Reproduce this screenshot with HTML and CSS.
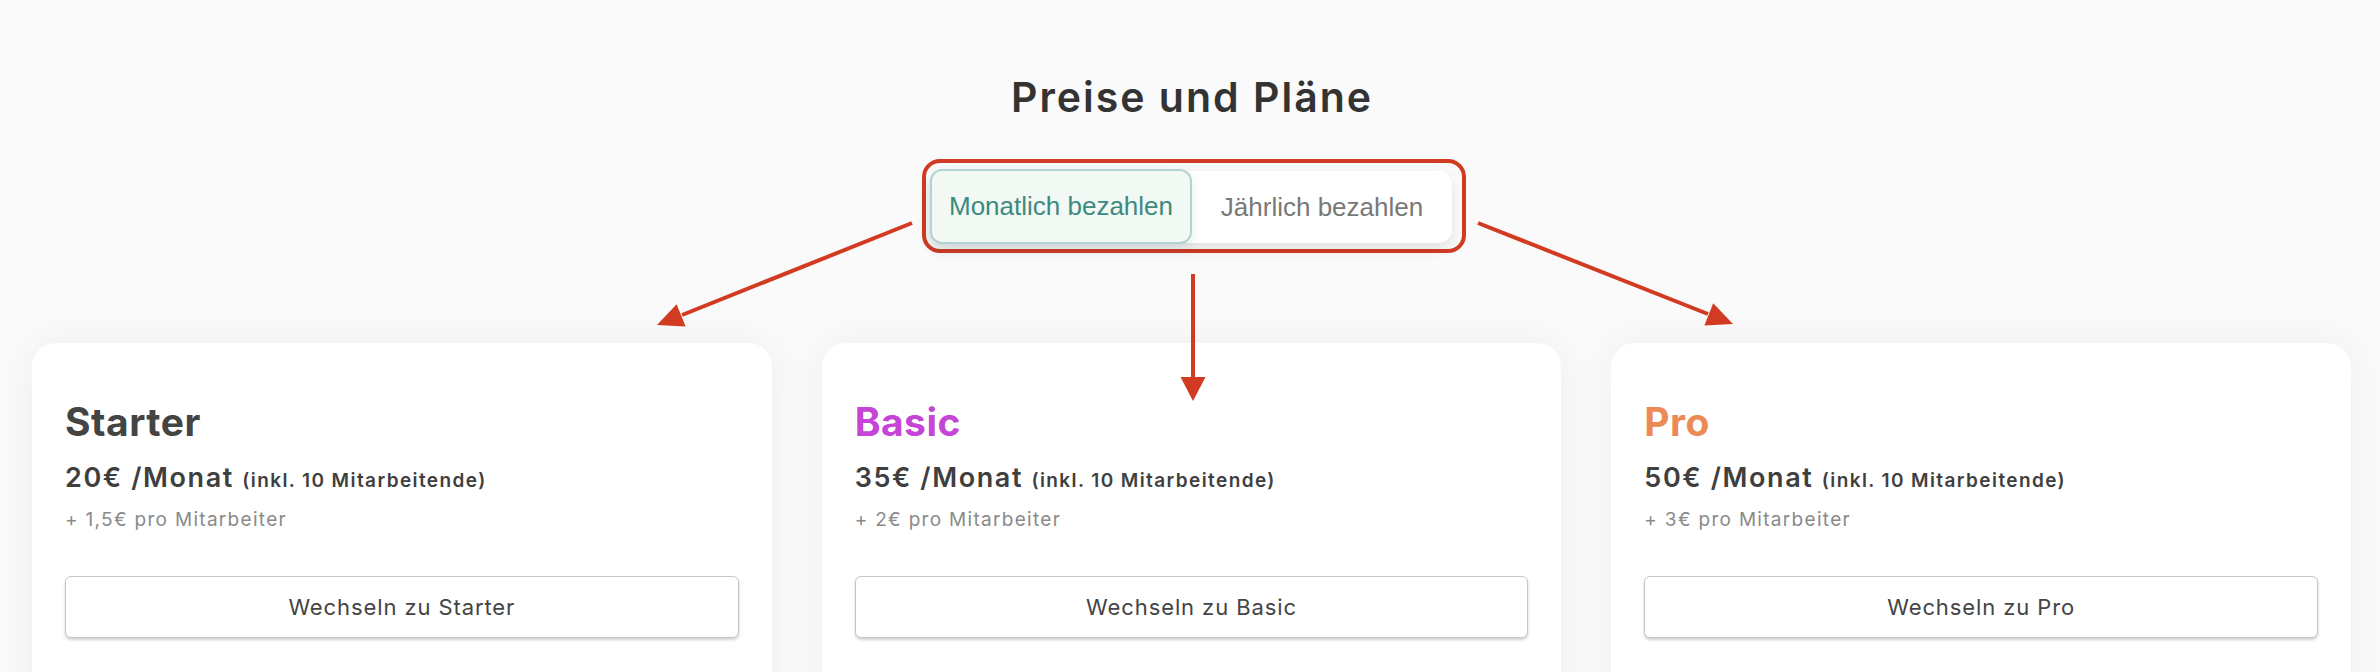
FILE: index.html
```html
<!DOCTYPE html>
<html lang="de">
<head>
<meta charset="utf-8">
<title>Preise und Pläne</title>
<link rel="stylesheet" href="styles.css">
</head>
<body>
<main class="page">
  <h1 class="title">Preise und Pläne</h1>
  <div class="toggle-frame">
    <div class="toggle">
      <button class="opt opt-active">Monatlich bezahlen</button>
      <button class="opt opt-idle">Jährlich bezahlen</button>
    </div>
  </div>
  <section class="plans">
    <article class="card">
      <h2 class="plan-name plan-starter">Starter</h2>
      <p class="price">20€ /Monat <span class="incl">(inkl. 10 Mitarbeitende)</span></p>
      <p class="extra">+ 1,5€ pro Mitarbeiter</p>
      <button class="switch">Wechseln zu Starter</button>
      <ul class="features"><li>Zeiterfassung für alle Mitarbeitenden</li></ul>
    </article>
    <article class="card">
      <h2 class="plan-name plan-basic">Basic</h2>
      <p class="price">35€ /Monat <span class="incl">(inkl. 10 Mitarbeitende)</span></p>
      <p class="extra">+ 2€ pro Mitarbeiter</p>
      <button class="switch">Wechseln zu Basic</button>
      <ul class="features"><li>Alles aus Starter, zusätzlich</li></ul>
    </article>
    <article class="card">
      <h2 class="plan-name plan-pro">Pro</h2>
      <p class="price">50€ /Monat <span class="incl">(inkl. 10 Mitarbeitende)</span></p>
      <p class="extra">+ 3€ pro Mitarbeiter</p>
      <button class="switch">Wechseln zu Pro</button>
      <ul class="features"><li>Alles aus Basic, zusätzlich</li></ul>
    </article>
  </section>
</main>
<svg class="arrows" width="2380" height="672" viewBox="0 0 2380 672" aria-hidden="true">
  <g stroke="#d13b22" stroke-width="4" stroke-linecap="butt" fill="none">
    <line x1="912" y1="223" x2="682" y2="315"/>
    <line x1="1193" y1="274" x2="1193" y2="378"/>
    <line x1="1478" y1="223" x2="1708" y2="314"/>
  </g>
  <g fill="#d13b22">
    <polygon points="657,325 685.6,326.5 676.6,304.3"/>
    <polygon points="1193,401 1180.5,377 1205.5,377"/>
    <polygon points="1733,324 1704.4,325.6 1713.2,303.2"/>
  </g>
</svg>
</body>
</html>
```
FILE: styles.css
```css
html, body {
  margin: 0;
  padding: 0;
}
body {
  background: #fafafa;
  font-family: "Inter", "Lato", "Liberation Sans", sans-serif;
  color: #3c3c3c;
  position: relative;
  overflow: hidden;
  height: 672px;
}
.page {
  display: flex;
  flex-direction: column;
  align-items: center;
  padding-top: 73px;
}
.title {
  margin: 0 0 0 4px;
  font-size: 41px;
  line-height: 48px;
  font-weight: 600;
  letter-spacing: 2px;
  color: #333;
}
.toggle-frame {
  margin: 38px 0 0 8px;
  border: 4px solid #d13b22;
  border-radius: 18px;
  padding: 8px 10px 6px 4px;
}
.toggle {
  display: flex;
  align-items: center;
  height: 72px;
  width: 522px;
  background: #fff;
  border-radius: 14px;
  box-shadow: 0 6px 14px rgba(0, 0, 0, 0.10);
}
.opt {
  font-family: "Liberation Sans", Arial, sans-serif;
  font-size: 26px;
  border: none;
  background: none;
  padding: 0;
  cursor: pointer;
}
.opt-active {
  width: 262px;
  height: 75px;
  margin-top: -1px;
  background: #f2f8f4;
  border: 2px solid #b3d3d2;
  border-radius: 12px;
  color: #3d8a80;
  box-shadow: 0 6px 12px rgba(60, 120, 120, 0.12);
}
.opt-idle {
  flex: 1;
  height: 72px;
  color: #787878;
}
.plans {
  align-self: stretch;
  display: grid;
  grid-template-columns: repeat(3, 1fr);
  gap: 50px;
  padding: 0 29px 0 32px;
  margin-top: 90px;
}
.card {
  background: #fff;
  border-radius: 24px;
  padding: 55px 33px 40px;
  box-shadow: 0 0 40px rgba(0, 0, 0, 0.05);
}
.plan-name {
  margin: 0;
  font-size: 39px;
  line-height: 48px;
  font-weight: 700;
  letter-spacing: 0.5px;
}
.plan-starter { color: #444; }
.plan-basic { color: #c445d6; }
.plan-pro { color: #ec8a56; }
.price {
  margin: 15px 0 0;
  font-size: 27px;
  line-height: 34px;
  font-weight: 600;
  letter-spacing: 1.6px;
  color: #3f3f3f;
}
.incl {
  font-size: 19px;
  letter-spacing: 1.4px;
}
.extra {
  margin: 10px 0 0;
  font-size: 19px;
  line-height: 24px;
  letter-spacing: 1.3px;
  color: #8a8a8a;
}
.switch {
  display: block;
  width: 100%;
  height: 62px;
  margin-top: 44px;
  background: #fff;
  border: 1.5px solid #c6c6c6;
  border-radius: 6px;
  box-shadow: 0 2px 3px rgba(0, 0, 0, 0.18);
  font-family: "Inter", "Lato", "Liberation Sans", sans-serif;
  font-size: 22px;
  letter-spacing: 0.9px;
  color: #444;
  cursor: pointer;
}
.features {
  list-style: none;
  margin: 32px 0 0;
  padding: 0;
  font-size: 20px;
  line-height: 24px;
  color: #9a9a9a;
}
.arrows {
  position: absolute;
  left: 0;
  top: 0;
  pointer-events: none;
}
```
